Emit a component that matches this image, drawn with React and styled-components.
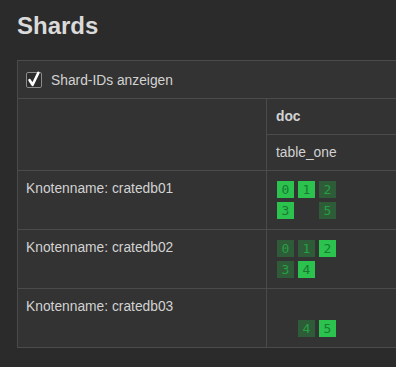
import React from "react";
import styled, { createGlobalStyle } from "styled-components";

const nodes = [
    { name: "cratedb01", shards: [
        { id: 0, primary: true }, { id: 1, primary: true }, { id: 2, primary: false },
        { id: 3, primary: true }, null, { id: 5, primary: false },
    ] },
    { name: "cratedb02", shards: [
        { id: 0, primary: false }, { id: 1, primary: false }, { id: 2, primary: true },
        { id: 3, primary: false }, { id: 4, primary: true }, null,
    ] },
    { name: "cratedb03", shards: [
        null, null, null,
        null, { id: 4, primary: false }, { id: 5, primary: true },
    ] },
];

export default function App() {
    return (
        <>
            <GlobalStyle />
            <Page>
                <Title>Shards</Title>
                <Panel>
                    <Toolbar>
                        <CheckLabel>
                            <CheckBox>
                                <svg width="16" height="18" viewBox="0 0 16 18">
                                    <path d="M3.6 10.2 L6.6 14.8 L12.4 2.8" fill="none" stroke="#fff" strokeWidth="2.6" strokeLinecap="round" strokeLinejoin="round" />
                                </svg>
                            </CheckBox>
                            Shard-IDs anzeigen
                        </CheckLabel>
                    </Toolbar>
                    <Table>
                        <Corner />
                        <HeadCell $bold>doc</HeadCell>
                        <HeadCell>table_one</HeadCell>
                        {nodes.map((node) => (
                            <React.Fragment key={node.name}>
                                <NodeCell>Knotenname: {node.name}</NodeCell>
                                <ShardCell>
                                    <ShardGrid>
                                        {node.shards.map((s, i) =>
                                            s ? (
                                                <Shard key={i} $primary={s.primary}>{s.id}</Shard>
                                            ) : (
                                                <Shard key={i} $empty />
                                            )
                                        )}
                                    </ShardGrid>
                                </ShardCell>
                            </React.Fragment>
                        ))}
                    </Table>
                </Panel>
            </Page>
        </>
    );
}

const GlobalStyle = createGlobalStyle`
    body {
        margin: 0;
        background: #2b2b2b;
        font-family: "Liberation Sans", Arial, sans-serif;
        color: #d2d2d2;
        overflow: hidden;
    }
`;

const Page = styled.div`
    padding: 12px 17px 0;
`;

const Title = styled.h2`
    margin: 0 0 20px;
    font-size: 24px;
    line-height: 28px;
    font-weight: bold;
    color: #dadada;
`;

const Panel = styled.section`
    width: 560px;
    background: #333333;
    border: 1px solid #4b4b4b;
`;

const Toolbar = styled.div`
    display: flex;
    align-items: center;
    height: 38px;
    padding: 1px 8px 0;
    box-sizing: border-box;
    border-bottom: 1px solid #4b4b4b;
`;

const CheckLabel = styled.label`
    display: flex;
    align-items: center;
    gap: 9px;
    font-size: 13.8px;
`;

const CheckBox = styled.span`
    position: relative;
    width: 14px;
    height: 14px;
    border: 1px solid #8c8c8c;
    border-radius: 2px;
    background: #2b2b2b;

    svg {
        position: absolute;
        left: -1px;
        top: -3px;
    }
`;

const Table = styled.div`
    display: grid;
    grid-template-columns: 249px 1fr;
    font-size: 13.8px;
`;

const Corner = styled.div`
    grid-row: span 2;
    border-right: 1px solid #4b4b4b;
    border-bottom: 1px solid #4b4b4b;
`;

const HeadCell = styled.div`
    height: 35px;
    display: flex;
    align-items: center;
    padding: 0 9px;
    font-weight: ${(props) => (props.$bold ? "bold" : "normal")};
    border-bottom: 1px solid #4b4b4b;
`;

const NodeCell = styled.div`
    padding: 9px 8px 0;
    line-height: 17px;
    border-right: 1px solid #4b4b4b;
    border-bottom: 1px solid #4b4b4b;

    &:nth-last-child(2) {
        border-bottom: none;
    }
`;

const ShardCell = styled.div`
    padding: 10px;
    border-bottom: 1px solid #4b4b4b;

    &:last-child {
        border-bottom: none;
    }
`;

const ShardGrid = styled.div`
    display: grid;
    grid-template-columns: repeat(3, 17px);
    gap: 4px;
`;

const Shard = styled.span`
    width: 17px;
    height: 17px;
    display: flex;
    align-items: center;
    justify-content: center;
    font-family: "DejaVu Sans Mono", "Liberation Mono", monospace;
    font-size: 13px;
    visibility: ${(props) => (props.$empty ? "hidden" : "visible")};
    background: ${(props) => (props.$primary ? "#2bc24e" : "#2e5b38")};
    color: ${(props) => (props.$primary ? "#1a7a33" : "#27a042")};
`;
